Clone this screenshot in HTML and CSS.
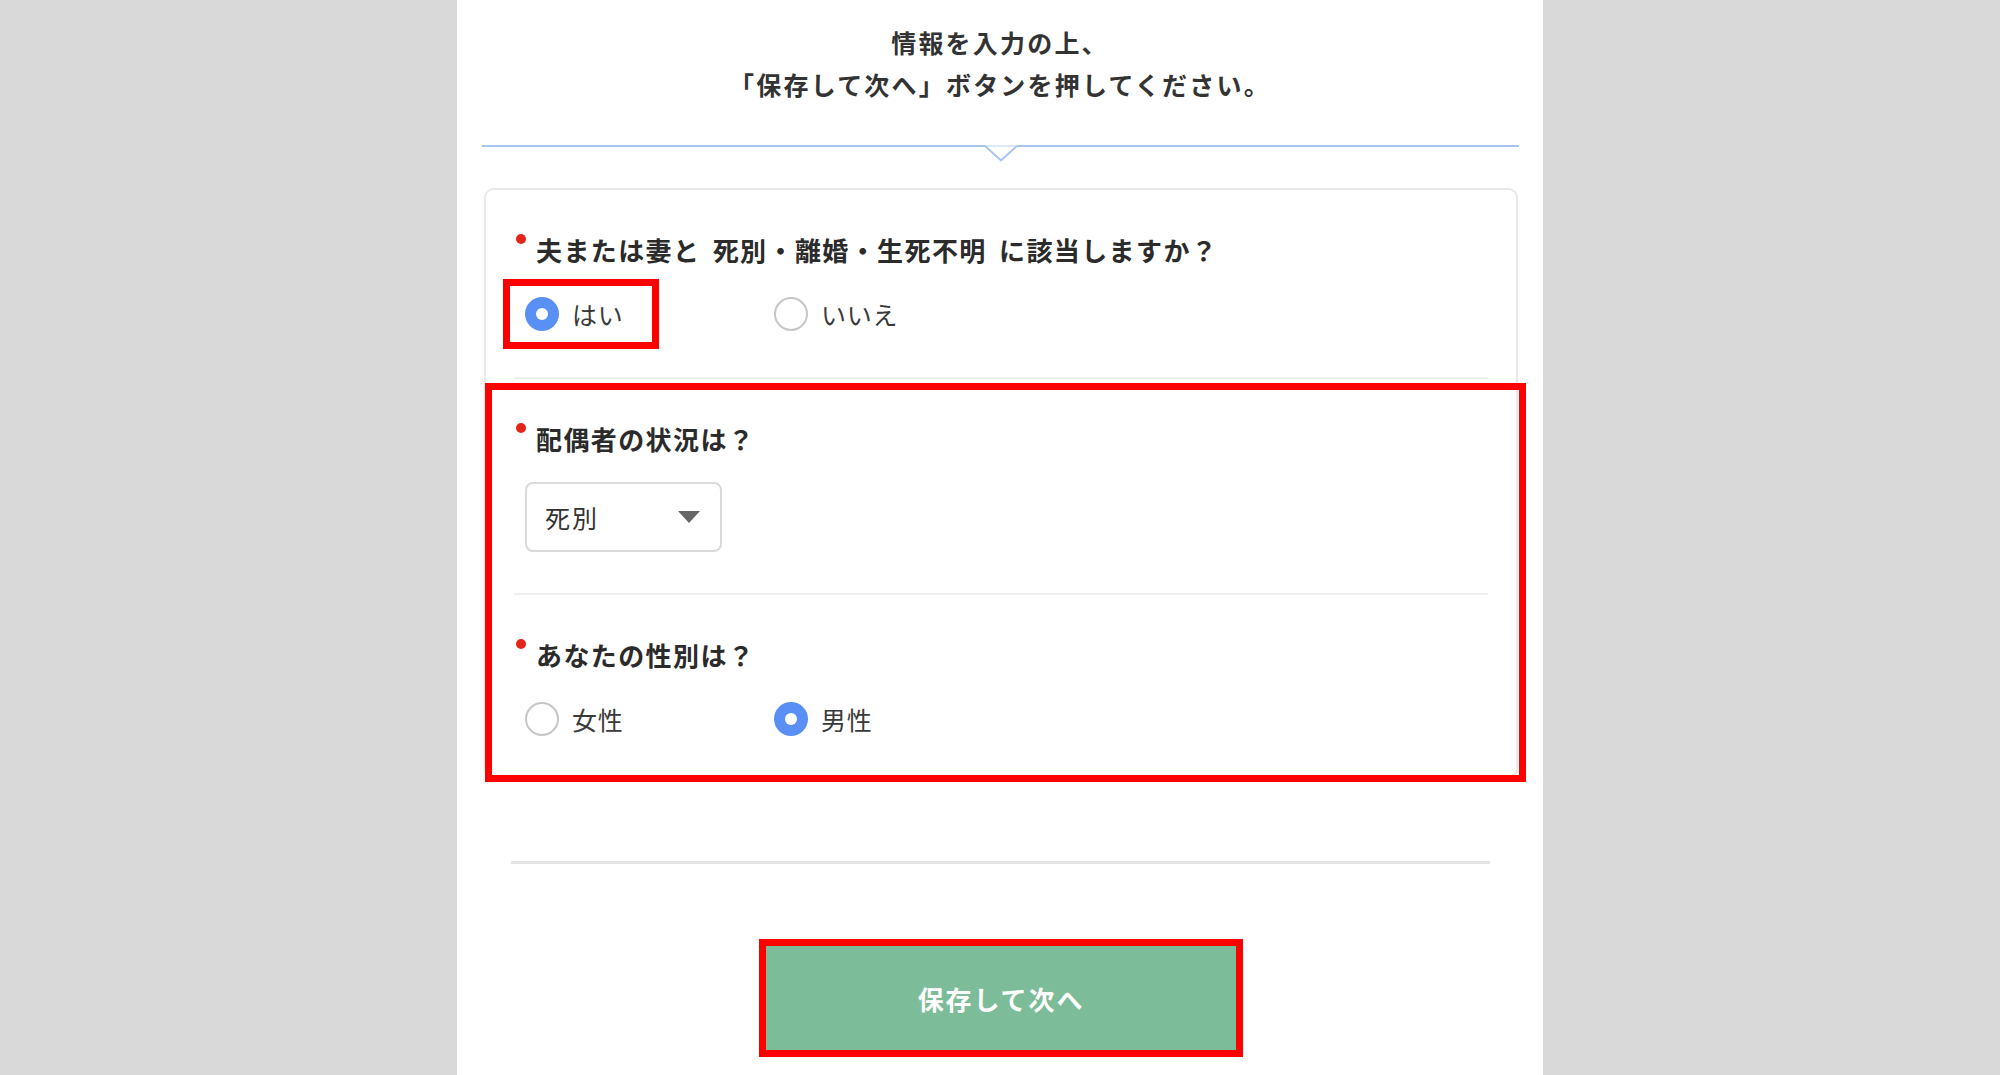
FILE: index.html
```html
<!DOCTYPE html>
<html lang="ja">
<head>
<meta charset="utf-8">
<title>配偶者情報</title>
<link rel="stylesheet" href="styles.css">
</head>
<body>
<main class="panel">
  <p class="intro">情報を入力の上、<br>「保存して次へ」ボタンを押してください。</p>

  <div class="divider">
    <span class="line"></span>
    <svg class="notch" width="32" height="17" viewBox="0 0 32 17" aria-hidden="true">
      <line x1="0" y1="1" x2="32" y2="1" stroke="#dde9f8" stroke-width="2"/>
      <polyline points="0,1 16,15.5 32,1" fill="none" stroke="#a6c6ee" stroke-width="2"/>
    </svg>
    <span class="line"></span>
  </div>

  <section class="card">
    <div class="q q-first">
      <p class="q-label">夫または妻と 死別・離婚・生死不明 に該当しますか？</p>
      <div class="options">
        <label class="opt opt-marked"><span class="radio checked"></span><span class="opt-text">はい</span></label>
        <label class="opt"><span class="radio"></span><span class="opt-text">いいえ</span></label>
      </div>
    </div>
    <div class="sep"></div>

    <div class="group">
      <div class="q q-select">
        <p class="q-label">配偶者の状況は？</p>
        <div class="select"><span class="select-text">死別</span><span class="caret"></span></div>
      </div>
      <div class="sep"></div>
      <div class="q q-last">
        <p class="q-label">あなたの性別は？</p>
        <div class="options">
          <label class="opt"><span class="radio"></span><span class="opt-text">女性</span></label>
          <label class="opt"><span class="radio checked"></span><span class="opt-text">男性</span></label>
        </div>
      </div>
    </div>
  </section>

  <div class="bottom-sep"></div>

  <div class="actions">
    <button class="next" type="button">保存して次へ</button>
  </div>
</main>
</body>
</html>
```

FILE: styles.css
```css
html, body {
  margin: 0;
  padding: 0;
}

body {
  background: #d9d9d9;
  font-family: "Noto Sans CJK JP", "Noto Sans", sans-serif;
  color: #333;
}

.panel {
  width: 1086px;
  min-height: 1075px;
  margin: 0 auto;
  background: #fff;
  padding: 21px 0 40px;
  box-sizing: border-box;
}

.intro {
  margin: 0;
  text-align: center;
  font-size: 25px;
  font-weight: 700;
  line-height: 42px;
  letter-spacing: 2.2px;
  color: #333;
}

.divider {
  display: flex;
  align-items: flex-start;
  height: 17px;
  margin: 40px 24px 0 25px;
}

.divider .line {
  flex: 1;
  height: 2px;
  background: #a6c6ee;
}

.notch {
  display: block;
  flex: none;
}

.card {
  margin: 26px 25px 0 27px;
  border: 2px solid #e9e9e9;
  border-radius: 10px;
  padding: 0 28px;
  box-shadow: 0 1px 3px rgba(0, 0, 0, 0.05);
}

.q {
  padding: 45px 0 43px;
}

.q-select {
  padding-bottom: 41px;
}

.q-last {
  padding-bottom: 37px;
}

.q-label {
  position: relative;
  margin: 0;
  padding-left: 22px;
  font-size: 26px;
  font-weight: 700;
  line-height: 30px;
  letter-spacing: 1.4px;
  word-spacing: 5px;
  color: #2b2b2b;
}

.q-label::before {
  content: "";
  position: absolute;
  left: 2px;
  top: -1px;
  width: 10px;
  height: 10px;
  border-radius: 50%;
  background: #e3241b;
}

.options {
  display: flex;
  height: 40px;
  margin: 29px 0 0 11px;
}

.opt {
  position: relative;
  display: flex;
  align-items: center;
  gap: 13px;
  width: 249px;
  font-size: 25px;
  letter-spacing: 0.8px;
  color: #3a3a3a;
}

.radio {
  flex: none;
  width: 34px;
  height: 34px;
  box-sizing: border-box;
  border: 2px solid #c6c6c6;
  border-radius: 50%;
  background: #fff;
}

.radio.checked {
  display: grid;
  place-items: center;
  border: none;
  background: #5a8ff5;
}

.radio.checked::after {
  content: "";
  width: 12px;
  height: 12px;
  border-radius: 50%;
  background: #fff;
}

.opt-marked::after {
  content: "";
  position: absolute;
  left: -22px;
  top: -15px;
  width: 156px;
  height: 70px;
  box-sizing: border-box;
  border: 7px solid #ff0000;
  pointer-events: none;
}

.sep {
  height: 2px;
  background: #efefef;
}

.group {
  position: relative;
}

.group::after {
  content: "";
  position: absolute;
  top: 4px;
  left: -29px;
  right: -38px;
  bottom: -6px;
  border: 7px solid #ff0000;
  pointer-events: none;
}

.select {
  display: flex;
  align-items: center;
  justify-content: space-between;
  width: 197px;
  height: 70px;
  margin: 28px 0 0 11px;
  padding: 0 20px 0 18px;
  box-sizing: border-box;
  border: 2px solid #dadada;
  border-radius: 8px;
  font-size: 25px;
  letter-spacing: 2px;
  color: #333;
}

.caret {
  width: 0;
  height: 0;
  border-left: 11px solid transparent;
  border-right: 11px solid transparent;
  border-top: 12px solid #666;
}

.bottom-sep {
  height: 3px;
  margin: 83px 53px 0 54px;
  background: #e5e5e5;
}

.actions {
  display: flex;
  justify-content: center;
  margin-top: 75px;
  padding-left: 2px;
}

.next {
  width: 484px;
  height: 118px;
  box-sizing: border-box;
  border: 7px solid #ff0000;
  background: #7dbc99;
  color: #fff;
  font-family: "Noto Sans CJK JP", "Noto Sans", sans-serif;
  font-size: 26px;
  font-weight: 700;
  letter-spacing: 1.9px;
  cursor: pointer;
}
```
